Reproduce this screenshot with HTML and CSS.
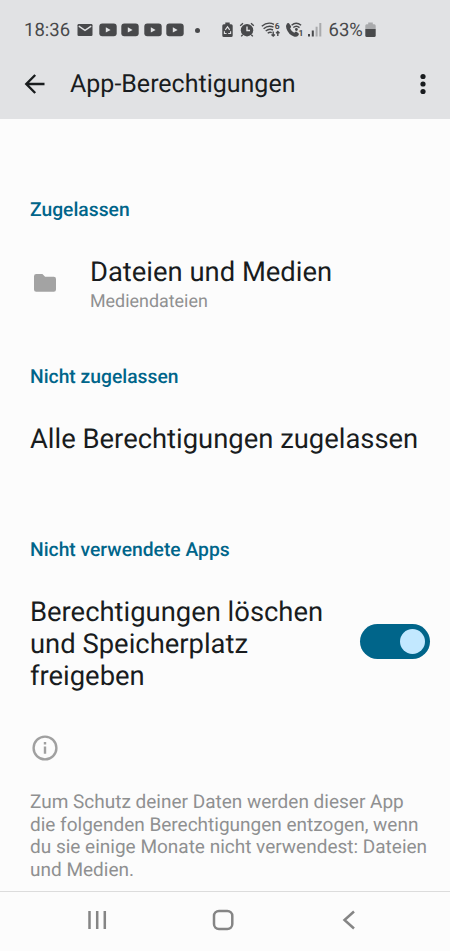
FILE: index.html
```html
<!DOCTYPE html>
<html lang="de">
<head>
  <meta charset="UTF-8">
  <meta name="viewport" content="width=device-width, initial-scale=1.0">
  <title>App-Berechtigungen</title>
  <link rel="stylesheet" href="styles.css">
</head>
<body>
  <div class="screen">
    <header class="top">
      <div class="status-bar">
        <span class="time">18:36</span>
        <div class="notifications">
          <svg class="mail" width="16" height="14" viewBox="0 0 16 14">
            <rect x="0.5" y="1" width="15" height="12" rx="1.2"/>
            <path class="cut" d="M1.8 3.2 8 7.3l6.2-4.1"/>
          </svg>
          <svg width="18" height="14" viewBox="0 0 18 14"><rect x="0.3" y="0.5" width="17.4" height="12.8" rx="3"/><path class="play" d="M6.8 4.2v5.4L11.6 6.9z"/></svg>
          <svg width="18" height="14" viewBox="0 0 18 14"><rect x="0.3" y="0.5" width="17.4" height="12.8" rx="3"/><path class="play" d="M6.8 4.2v5.4L11.6 6.9z"/></svg>
          <svg width="18" height="14" viewBox="0 0 18 14"><rect x="0.3" y="0.5" width="17.4" height="12.8" rx="3"/><path class="play" d="M6.8 4.2v5.4L11.6 6.9z"/></svg>
          <svg width="18" height="14" viewBox="0 0 18 14"><rect x="0.3" y="0.5" width="17.4" height="12.8" rx="3"/><path class="play" d="M6.8 4.2v5.4L11.6 6.9z"/></svg>
        </div>
        <span class="dot"></span>
        <div class="system">
          <svg width="11" height="16" viewBox="0 0 11 16">
            <path d="M3.3.5h4.400v1.700h1.500Q10.700 2.200 10.700 3.700v9.800q0 1.500-1.500 1.500H1.800Q.3 15 .3 13.500V3.700Q.3 2.200 1.800 2.200h1.500z"/>
            <path class="cut thin" d="M3.300 7.800 5.500 4.800l2.200 3M2.400 9.200v2.300h2.200M8.600 9.200v2.300H6.200"/>
          </svg>
          <svg class="alarm" width="16" height="16" viewBox="0 0 16 16">
            <circle cx="8" cy="8.200" r="6.200"/>
            <path class="line" d="M1.200 3.700 4 1.300M14.800 3.700 12 1.300M3.700 12.700 2.200 14.400M12.300 12.700l1.500 1.700"/>
            <path class="cut" d="M8 4.500v4h3"/>
          </svg>
          <svg class="wifi" width="20" height="16" viewBox="0 0 20 16">
            <path class="line" d="M.8 4.300Q6.500-.8 13 2.300M2.600 6.700Q7.300 2.700 12.500 5.200M4.700 9Q8.200 6.100 12 8M6.700 11.300q2-1.600 4.100-.7"/>
            <path class="line" d="M12.200 9.500v4.300M10.500 12.400l1.700 1.700 1.700-1.700M16.800 14V9.600M15.100 11.300l1.700-1.700 1.700 1.700"/>
            <text x="13.700" y="7.300">6</text>
          </svg>
          <svg class="call" width="18" height="16" viewBox="0 0 18 16">
            <path d="M1 1.500Q2 .6 3 1.300L5 4.200q.4.700-.2 1.300L4.100 6.400q1.300 2.800 4.100 4.300l1-.8q.6-.6 1.300-.1l2 1.500q.8.800 0 1.900-1.800 2.200-4.600 1.300Q2.500 12.700.4 6.500-.4 3.300 1 1.500z"/>
            <path class="line" d="M5.600 3.300q4.500-4 9.500 0M7.300 5.600q3-2.800 6.200 0"/>
            <circle cx="10.400" cy="7.500" r="1.400"/>
            <text x="12.600" y="14.200">1</text>
          </svg>
          <svg class="signal" width="14" height="16" viewBox="0 0 14 16">
            <rect x="0" y="12" width="2" height="2.500"/>
            <rect x="3.800" y="8.500" width="2" height="6"/>
            <rect class="faint" x="7.600" y="4.700" width="2" height="9.800"/>
            <rect class="faint" x="11.300" y="1" width="2" height="13.500"/>
          </svg>
        </div>
        <span class="percent">63%</span>
        <svg class="battery" width="11" height="16" viewBox="0 0 11 16">
          <path class="faint" d="M3.200.5h4.600v1.700h1.500Q10.700 2.200 10.700 3.700V7H.3V3.700Q.3 2.200 1.700 2.200h1.500z"/>
          <path d="M.3 7h10.400v6.500q0 1.500-1.500 1.500H1.800Q.3 15 .3 13.500z"/>
        </svg>
      </div>
      <div class="app-bar">
        <svg class="back" width="20" height="20" viewBox="0 0 20 20"><path d="M19.500 10H1.500M10.200 1 1.300 10l8.900 9"/></svg>
        <h1>App-Berechtigungen</h1>
        <svg class="more" width="6" height="22" viewBox="0 0 6 22"><circle cx="3" cy="3.500" r="2.600"/><circle cx="3" cy="11" r="2.600"/><circle cx="3" cy="18.500" r="2.600"/></svg>
      </div>
    </header>

    <main class="content">
      <section class="allowed">
        <h2>Zugelassen</h2>
        <div class="permission">
          <svg class="folder" width="22" height="18" viewBox="0 0 22 18"><path d="M2.200 0h6.200l2.700 2.700h8.700Q22 2.700 22 4.900v10.700Q22 17.800 19.800 17.800H2.200Q0 17.800 0 15.600V2.200Q0 0 2.200 0z"/></svg>
          <div>
            <div class="title">Dateien und Medien</div>
            <div class="summary">Mediendateien</div>
          </div>
        </div>
      </section>

      <section class="denied">
        <h2>Nicht zugelassen</h2>
        <div class="title">Alle Berechtigungen zugelassen</div>
      </section>

      <section class="unused">
        <h2>Nicht verwendete Apps</h2>
        <div class="setting">
          <div class="title">Berechtigungen löschen und Speicherplatz freigeben</div>
          <div class="switch"><span class="thumb"></span></div>
        </div>
        <svg class="info" width="26" height="26" viewBox="0 0 26 26"><circle cx="13" cy="13" r="11.400"/><path d="M13 11.600v7.200M13 6.900v2.600"/></svg>
        <p class="note">Zum Schutz deiner Daten werden dieser App die folgenden Berechtigungen entzogen, wenn du sie einige Monate nicht verwendest: Dateien und Medien.</p>
      </section>
    </main>

    <nav class="nav-bar">
      <svg width="20" height="20" viewBox="0 0 20 20"><path d="M2.500 1v18M10.200 1v18M17.800 1v18"/></svg>
      <svg class="home" width="22" height="22" viewBox="0 0 22 22"><rect x="2" y="2" width="18.300" height="18" rx="5"/></svg>
      <svg width="14" height="20" viewBox="0 0 14 20"><path d="M12 1.500 2.500 10l9.500 8.500"/></svg>
    </nav>
  </div>
</body>
</html>
```
FILE: styles.css
```css
* {
  box-sizing: border-box;
}

body {
  margin: 0;
  font-family: Roboto, sans-serif;
  background: #fcfcfc;
  color: #191c1e;
  text-rendering: geometricPrecision;
}

h1, h2, p {
  margin: 0;
  font-weight: 400;
}

svg {
  display: block;
  flex: none;
  overflow: visible;
}

.screen {
  height: 951px;
  display: flex;
  flex-direction: column;
}

.top {
  height: 119px;
  background: #e1e2e4;
}

.status-bar {
  display: flex;
  align-items: center;
  height: 60px;
  padding-left: 25px;
  color: #48494b;
  font-size: 18.5px;
}

.status-bar svg {
  fill: #48494b;
}

.status-bar .cut,
.status-bar .line {
  fill: none;
  stroke: #e1e2e4;
  stroke-width: 1.4;
}

.status-bar .line {
  stroke: #48494b;
}

.status-bar .thin {
  stroke-width: 1.1;
}

.status-bar .play {
  fill: #e1e2e4;
}

.status-bar .faint {
  fill: #a9aaac;
}

.status-bar text {
  font-size: 8.5px;
  font-weight: 700;
}

.time {
  width: 52px;
  margin-left: -1px;
}

.notifications {
  display: flex;
  align-items: center;
  gap: 4.5px;
  margin-left: 1px;
}

.mail {
  margin-right: 1px;
}

.dot {
  width: 5px;
  height: 5px;
  margin-left: 11px;
  border-radius: 50%;
  background: #48494b;
}

.system {
  display: flex;
  margin-left: 21.5px;
}

.alarm {
  margin-left: 6px;
}

.wifi {
  margin-left: 6px;
}

.call {
  margin-left: 5px;
}

.signal {
  margin-left: 4px;
}

.percent {
  width: 36px;
  margin-left: 7px;
}

.app-bar {
  display: flex;
  align-items: center;
  height: 48px;
  padding: 0 24px 0 25px;
}

.app-bar h1 {
  flex: 1;
  margin-left: 25px;
  font-size: 25px;
}

.back {
  fill: none;
  stroke: #191c1e;
  stroke-width: 2.4;
}

.more {
  fill: #191c1e;
}

.content {
  flex: 1;
  padding: 80px 20px 0 30px;
}

h2 {
  font-size: 19.3px;
  font-weight: 500;
  line-height: 22px;
  color: #00658a;
}

.title {
  font-size: 27.4px;
  line-height: 32px;
}

.summary {
  margin-top: 3px;
  font-size: 17.9px;
  line-height: 22px;
  color: #8f9091;
}

.permission {
  display: flex;
  align-items: center;
  gap: 34px;
  height: 57px;
  margin-top: 35px;
}

.folder {
  margin: -3px 0 0 4px;
  fill: #a3a3a3;
}

.denied {
  margin-top: 53px;
}

.denied .title {
  margin-top: 35px;
}

.unused {
  margin-top: 84px;
}

.setting {
  display: flex;
  align-items: center;
  justify-content: space-between;
  margin-top: 35px;
}

.setting .title {
  width: 310px;
}

.switch {
  display: flex;
  align-items: center;
  justify-content: flex-end;
  width: 70px;
  height: 35px;
  margin-bottom: 5px;
  padding-right: 5px;
  border-radius: 18px;
  background: #00658a;
}

.thumb {
  width: 25px;
  height: 25px;
  border-radius: 50%;
  background: #c2e8ff;
}

.info {
  margin: 42.5px 0 0 2px;
  fill: none;
  stroke: #a0a0a0;
  stroke-width: 2.4;
}

.note {
  width: 400px;
  margin-top: 30.5px;
  font-size: 19px;
  line-height: 22.5px;
  color: #8f9091;
}

.nav-bar {
  display: flex;
  align-items: center;
  height: 60px;
  padding: 0 94px 3px 87px;
  justify-content: space-between;
  border-top: 1px solid #dcdcdc;
}

.nav-bar svg {
  fill: none;
  stroke: #858585;
  stroke-width: 2.5;
}

.nav-bar .home {
  margin-right: 3px;
}
```
